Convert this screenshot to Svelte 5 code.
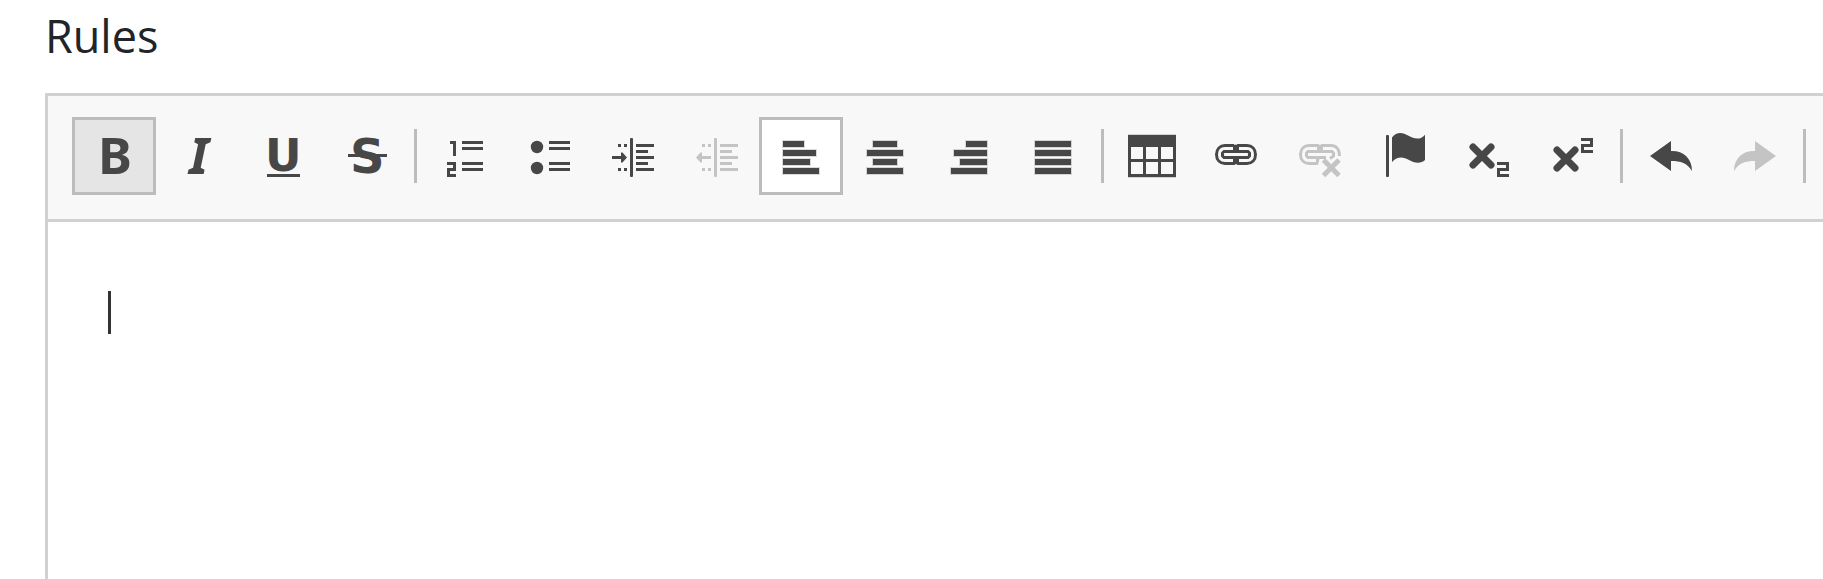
<script>
  let bold = $state(true);
  let align = $state('left');
  let focused = $state(true);
  let content = $state('');

  const groups = [
    ['bold', 'italic', 'underline', 'strike'],
    ['numbered', 'bulleted', 'indent', 'outdent', 'left', 'center', 'right', 'justify'],
    ['table', 'link', 'unlink', 'anchor', 'subscript', 'superscript'],
    ['undo', 'redo']
  ];
  const labels = {
    bold: 'Bold', italic: 'Italic', underline: 'Underline', strike: 'Strikethrough',
    numbered: 'Insert/Remove Numbered List', bulleted: 'Insert/Remove Bulleted List',
    indent: 'Increase Indent', outdent: 'Decrease Indent',
    left: 'Align Left', center: 'Center', right: 'Align Right', justify: 'Justify',
    table: 'Table', link: 'Link', unlink: 'Unlink', anchor: 'Anchor',
    subscript: 'Subscript', superscript: 'Superscript', undo: 'Undo', redo: 'Redo'
  };
  const disabled = ['outdent', 'unlink', 'redo'];
  const alignBars = {
    left: [[6, 21], [6, 33], [6, 27], [6, 36]],
    center: [[12, 24], [6, 36], [12, 24], [6, 36]],
    right: [[21, 21], [9, 33], [15, 27], [6, 36]],
    justify: [[6, 36], [6, 36], [6, 36], [6, 36]]
  };

  function press(name) {
    if (name === 'bold') bold = !bold;
    if (alignBars[name]) align = name;
  }
</script>

{#snippet listLines(x)}
  {#each [9, 15, 30, 36] as y}<rect {x} {y} width="21" height="3" />{/each}
{/snippet}

{#snippet indentBody()}
  <rect x="21" y="6" width="3" height="39" rx="1" />
  {#each [18, 12, 18, 12, 18] as w, i}<rect x="27" y={12 + i * 6} width={w} height="3" />{/each}
  {#each [12, 36] as y}
    <rect x="9" {y} width="3" height="3" /><rect x="15" {y} width="3" height="3" />
  {/each}
{/snippet}

{#snippet two(x, y)}
  <path class="line" transform="translate({x} {y})" d="M0 1.5H10.500V7.500H1.500V13.500H12" />
{/snippet}

{#snippet icon(name)}
  <svg viewBox="0 0 48 48" aria-hidden="true">
    {#if name === 'bold'}
      <text class="narrow" x="8" y="42" font-size="51">B</text>
    {:else if name === 'italic'}
      <text class="narrow slanted" x="15" y="42" font-size="51">I</text>
    {:else if name === 'underline'}
      <text x="7" y="39" font-size="45">U</text>
      <rect x="9" y="42" width="33" height="3" />
    {:else if name === 'strike'}
      <text x="8" y="41" font-size="48">S</text>
      <rect x="6" y="22" width="39" height="3" />
    {:else if name === 'numbered'}
      <path class="line" d="M9 10.5H13.5V24M6 31.500H13.500V37.500H7.500V43.500H15" />
      {@render listLines(21)}
    {:else if name === 'bulleted'}
      <circle cx="12" cy="15" r="6.200" /><circle cx="12" cy="36" r="6.200" />
      {@render listLines(24)}
    {:else if name === 'indent'}
      <path d="M3 24H12V20.500H13.500L18 25.500L13.500 30.500H12V27H3Z" />
      {@render indentBody()}
    {:else if name === 'outdent'}
      <path d="M18 24H9V20.500H7.500L3 25.500L7.500 30.500H9V27H18Z" />
      {@render indentBody()}
    {:else if alignBars[name]}
      {#each alignBars[name] as [x, w], i}
        <rect class="halo" x={x - 1} y={8 + i * 9} width={w + 2} height="8" />
        <rect {x} y={9 + i * 9} width={w} height="6" />
      {/each}
    {:else if name === 'table'}
      <rect class="halo" x="0" y="2" width="48" height="44" />
      <rect x="0" y="3" width="48" height="42" />
      {#each [3, 18, 33] as x}
        {#each [15, 30] as y}<rect class="cell" {x} {y} width="12" height="12" />{/each}
      {/each}
    {:else if name === 'link'}
      <path class="line" d="M22 13.500H13C8 13.500 4.500 17 4.500 22.500S8 31.500 13 31.500H22L24 30L26 31.500H35C40 31.500 43.500 28 43.500 22.500S40 13.500 35 13.500H26L24 15L22 13.500M12 19.500H36L37.500 21V24L36 25.500H12L10.500 24V21Z" />
      <path d="M21 13H27V20H21ZM21 25H27V32H21Z" />
    {:else if name === 'unlink'}
      <path class="line" d="M22 31.500H13C8 31.500 4.500 28 4.500 22.500S8 13.500 13 13.500H22L24 15L26 13.500H35C40 13.500 43.500 17 43.500 24M30 25.500H12L10.500 24V21L12 19.500H36L37.500 21V24L34 26.500" />
      <path d="M21 13H27V20H21ZM20 25H24L22 33H20Z" />
      <path class="cross" d="M27.500 28L43 43.500M43 28L27.500 43.500" />
    {:else if name === 'anchor'}
      <rect x="6" y="3" width="3" height="42" rx="1" />
      <path d="M12 5.500C16 0 22 0 27 3C33 6.500 40 9 45 2.700V28C41 32 34 31 29 28C23 24.500 17 24.500 12 30Z" />
    {:else if name === 'subscript'}
      <path class="times" d="M9 15L27 33M27 15L9 33" />
      {@render two(33, 30)}
    {:else if name === 'superscript'}
      <path class="times" d="M9 18L27 36M27 18L9 36" />
      {@render two(33, 6)}
    {:else if name === 'undo'}
      <path d="M3 24L24 9V19C36 18.500 45 26 45 39C40 31 34 29 24 29V39Z" />
    {:else if name === 'redo'}
      <path d="M45 24L24 9V19C12 18.500 3 26 3 39C8 31 14 29 24 29V39Z" />
    {/if}
  </svg>
{/snippet}

<main>
  <label for="rules">Rules</label>
  <section class="editor">
    <div class="toolbar" role="toolbar" aria-label="Editor toolbar">
      {#each groups as group}
        <div class="group">
          {#each group as name}
            <button
              type="button"
              class:on={name === 'bold' && bold}
              class:chosen={name === align}
              disabled={disabled.includes(name)}
              aria-label={labels[name]}
              onclick={() => press(name)}>{@render icon(name)}</button>
          {/each}
        </div>
        <span class="separator"></span>
      {/each}
    </div>
    <div class="body">
      {#if focused && content === ''}<span class="caret"></span>{/if}
      <textarea id="rules" bind:value={content} onfocus={() => (focused = true)} onblur={() => (focused = false)}></textarea>
    </div>
  </section>
</main>

<style>
  :global(body) {
    background: #fff;
    overflow: hidden;
  }
  main {
    box-sizing: border-box;
    min-height: 100vh;
    padding-left: 45px;
    display: flex;
    flex-direction: column;
    overflow: hidden;
    font-family: "Noto Sans", "Open Sans", sans-serif;
  }
  label {
    height: 72px;
    margin-bottom: 21px;
    font-family: "Open Sans", "Noto Sans", sans-serif;
    font-size: 45px;
    line-height: 72px;
    color: #212529;
  }
  .editor {
    flex: 1;
    display: flex;
    flex-direction: column;
    border-top: 3px solid #d1d1d1;
    border-left: 3px solid #d1d1d1;
  }
  .toolbar {
    display: flex;
    align-items: center;
    padding: 21px 24px 24px;
    background: #f8f8f8;
    border-bottom: 3px solid #d1d1d1;
  }
  .group {
    display: flex;
    flex: none;
  }
  .separator {
    flex: none;
    width: 3px;
    height: 54px;
    margin: 0 6px;
    background: #bcbcbc;
  }
  button {
    box-sizing: border-box;
    flex: none;
    padding: 12px 15px;
    border: 3px solid transparent;
    border-radius: 0;
    background: transparent;
    color: #474747;
  }
  button:disabled {
    color: #c4c4c4;
  }
  .on {
    background: #e5e5e5;
    border-color: #bcbcbc;
  }
  .chosen {
    background: #fff;
    border-color: #bcbcbc;
  }
  svg {
    display: block;
    width: 48px;
    height: 48px;
    fill: currentColor;
    overflow: visible;
  }
  text {
    font-family: "DejaVu Sans", sans-serif;
    font-weight: 700;
  }
  .narrow {
    font-family: "Noto Sans", sans-serif;
  }
  .slanted {
    font-style: italic;
  }
  .line, .cross, .times {
    fill: none;
    stroke: currentColor;
    stroke-width: 3;
  }
  .cross {
    stroke-width: 5;
  }
  .times {
    stroke-width: 7;
    stroke-linecap: round;
  }
  .halo {
    opacity: 0.2;
  }
  .cell {
    fill: #f8f8f8;
  }
  .body {
    flex: 1;
    display: flex;
    align-items: flex-start;
    padding: 60px;
    padding-left: 60px;
  }
  .caret {
    width: 3px;
    height: 43px;
    margin-top: 9px;
    background: #333;
  }
  textarea {
    flex: 1;
    height: 180px;
    padding: 0;
    border: 0;
    outline: 0;
    resize: none;
    background: transparent;
    font: 39px/62px "Noto Sans", sans-serif;
    color: #333;
  }
</style>
